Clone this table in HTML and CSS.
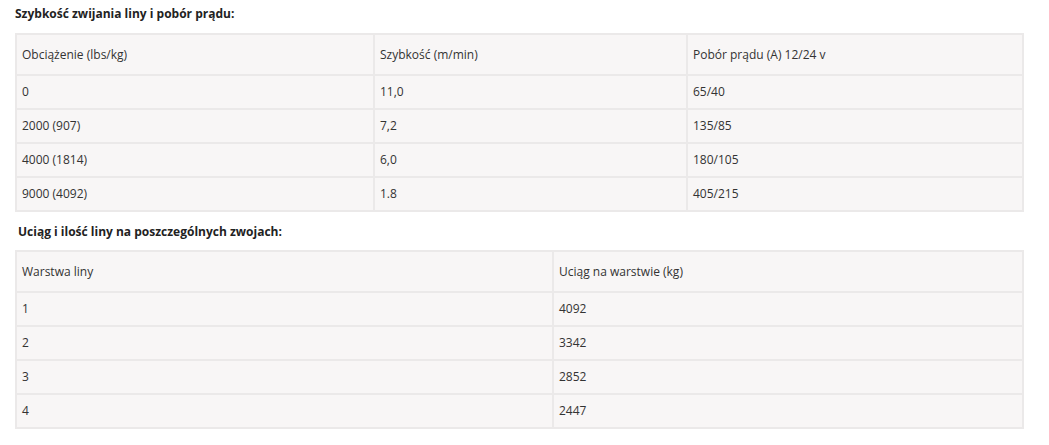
FILE: index.html
```html
<!DOCTYPE html>
<html lang="pl">
<head>
<meta charset="utf-8">
<title>Parametry</title>
<link rel="stylesheet" href="styles.css">
</head>
<body>
<div class="page">
  <h3 class="title">Szybkość zwijania liny i pobór prądu:</h3>
  <table class="spec spec-3">
    <colgroup>
      <col class="c31"><col class="c32"><col class="c33">
    </colgroup>
    <tr class="head"><td>Obciążenie (lbs/kg)</td><td>Szybkość (m/min)</td><td>Pobór prądu (A) 12/24 v</td></tr>
    <tr><td>0</td><td>11,0</td><td>65/40</td></tr>
    <tr><td>2000 (907)</td><td>7,2</td><td>135/85</td></tr>
    <tr><td>4000 (1814)</td><td>6,0</td><td>180/105</td></tr>
    <tr><td>9000 (4092)</td><td>1.8</td><td>405/215</td></tr>
  </table>
  <h3 class="title title-2">Uciąg i ilość liny na poszczególnych zwojach:</h3>
  <table class="spec spec-2">
    <colgroup>
      <col class="c21"><col class="c22">
    </colgroup>
    <tr class="head"><td>Warstwa liny</td><td>Uciąg na warstwie (kg)</td></tr>
    <tr><td>1</td><td>4092</td></tr>
    <tr><td>2</td><td>3342</td></tr>
    <tr><td>3</td><td>2852</td></tr>
    <tr><td>4</td><td>2447</td></tr>
  </table>
</div>
</body>
</html>
```
FILE: styles.css
```css
html, body {
  margin: 0;
  padding: 0;
  background: #ffffff;
}
.page {
  padding: 5px 25px 0 15px;
  font-family: "Open Sans", "Liberation Sans", sans-serif;
  color: #333333;
}
.title {
  margin: 0 0 10px 0;
  font-size: 12px;
  line-height: 18px;
  font-weight: 700;
  color: #222222;
}
.title-2 {
  margin-top: 11px;
  margin-bottom: 9px;
  padding-left: 3px;
}
.spec {
  width: 1009px;
  border-collapse: separate;
  border-spacing: 2px;
  background: #ebe9e9;
  table-layout: fixed;
  font-size: 12px;
}
.spec td {
  background: #f8f6f6;
  padding: 7px 5px 7px 5px;
  line-height: 18px;
  vertical-align: middle;
  color: #333333;
}
.spec .head td {
  padding: 11px 5px 10px 5px;
}
.c31 { width: 356px; }
.c32 { width: 311px; }
.c33 { width: auto; }
.c21 { width: 535px; }
.c22 { width: auto; }
```
